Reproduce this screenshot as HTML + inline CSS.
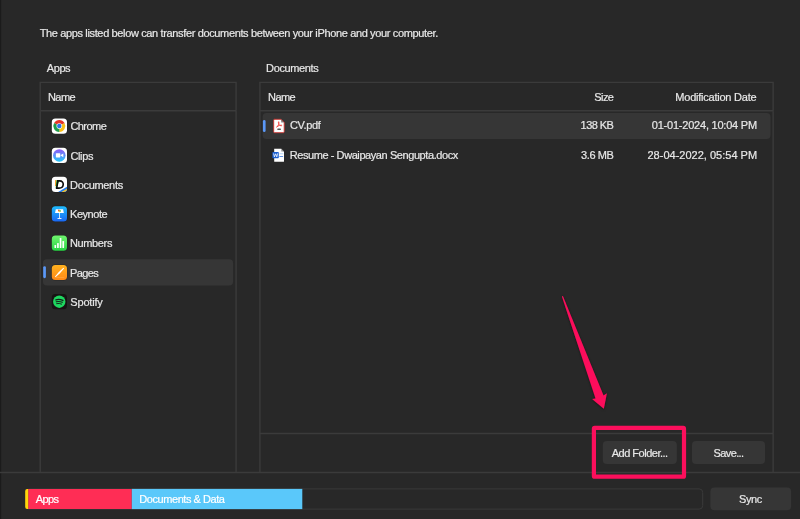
<!DOCTYPE html>
<html lang="en">
<head>
<meta charset="utf-8">
<title>File Sharing</title>
<style>
html,body{margin:0;padding:0;}
body{width:800px;height:519px;overflow:hidden;background:#282828;position:relative;
  font-family:"Liberation Sans",sans-serif;font-size:11px;color:#e6e6e6;}
.abs{position:absolute;}
.t{position:absolute;white-space:nowrap;line-height:14px;height:14px;color:#e8e8e8;font-size:11px;-webkit-text-stroke-width:0.2px;}
.r{text-align:right;}
.edge{left:0;top:0;width:2px;height:519px;background:#1f1f1f;}
.panel{border:1px solid #3b3b3b;box-sizing:border-box;}
.hline{height:1px;background:#3b3b3b;}
.sel{background:#363636;border-radius:5px;}
.ind{width:3px;border-radius:1.5px;background:#4c8ef5;}
.btn{background:#363636;border-radius:5px;text-align:center;color:#ececec;line-height:23px;height:23px;font-size:11px;}
.ico{position:absolute;width:14px;height:14px;}
</style>
</head>
<body>
<div id="root" style="position:absolute;left:0;top:0;width:800px;height:519px;will-change:transform;">
<div class="abs" style="left:0;top:0;width:1px;height:519px;background:#1b1b1b;"></div><div class="abs" style="left:1px;top:0;width:1px;height:519px;background:#252525;"></div>



<!-- panels -->
<svg class="abs" style="left:0;top:0;" width="800" height="519" viewBox="0 0 800 519">
<g stroke="#3b3b3b" stroke-width="1.4" fill="none">
<path d="M40.2 473 V82.35 H236.05 V473"/>
<path d="M40.2 110.7 H236.05"/>
<path d="M259.9 473 V82.35 H773.1 V473"/>
<path d="M259.9 110.7 H773.1"/>
<path d="M259.9 433.5 H773.1"/>
<path d="M0 472.5 H800"/>
</g>
<!-- selections -->
<rect x="42.9" y="259.2" width="190.2" height="26.2" rx="4" fill="#363636"/>
<rect x="43.2" y="266.2" width="2.7" height="12" rx="1.35" fill="#5b98f7"/>
<rect x="262.6" y="113" width="507.9" height="26.1" rx="4" fill="#363636"/>
<rect x="262.9" y="120.1" width="2.7" height="11.9" rx="1.35" fill="#5b98f7"/>
<!-- buttons -->
<rect x="602.8" y="441" width="74" height="23" rx="4" fill="#363636"/>
<rect x="692" y="441" width="73" height="23" rx="4" fill="#363636"/>
<rect x="710.4" y="487.5" width="80.7" height="22.7" rx="4" fill="#363636"/>
<!-- storage bar -->
<rect x="25.7" y="488.9" width="677" height="20.2" rx="3.5" fill="none" stroke="#3a3a3a" stroke-width="1"/>
<path d="M28.2 488.9 H131.8 V509.1 H28.2 Z" fill="#ff2d55"/>
<path d="M28.2 488.9 V509.1 H27.2 a2 2 0 0 1 -2 -2 V490.9 a2 2 0 0 1 2 -2 Z" fill="#ffd60a"/>
<rect x="131.8" y="488.9" width="170.5" height="20.2" fill="#5ac8fa"/>
</svg>

<svg class="abs" style="left:0;top:0;" width="800" height="519" viewBox="0 0 800 519">
<defs>
<linearGradient id="gcl" x1="0" y1="0" x2="0" y2="1"><stop offset="0" stop-color="#8f58f6"/><stop offset=".5" stop-color="#5d8ff9"/><stop offset="1" stop-color="#20cafc"/></linearGradient>
<linearGradient id="gkn" x1="0" y1="0" x2="0" y2="1"><stop offset="0" stop-color="#1fbcfe"/><stop offset="1" stop-color="#1a68f2"/></linearGradient>
<linearGradient id="gnm" x1="0" y1="0" x2="0" y2="1"><stop offset="0" stop-color="#70f56e"/><stop offset="1" stop-color="#27d444"/></linearGradient>
<linearGradient id="gpg" x1="0" y1="0" x2="0" y2="1"><stop offset="0" stop-color="#ffb21f"/><stop offset="1" stop-color="#ff8816"/></linearGradient>
<clipPath id="cpr"><rect width="16" height="16" rx="3.7"/></clipPath>
</defs>
<!-- Chrome -->
<g transform="translate(51.8 118.5) scale(.95)">
<rect x="-.4" y="-.4" width="16.8" height="16.8" rx="4" fill="#1a1a1a" opacity=".55"/>
<rect width="16" height="16" rx="3.7" fill="#fff"/>
<g transform="translate(7.9 7.9)">
<path d="M0 0 L-5.46 -3.15 A6.3 6.3 0 0 1 5.46 -3.15 Z" fill="#e53528"/>
<path d="M0 0 L5.46 -3.15 A6.3 6.3 0 0 1 0 6.3 Z" fill="#fbc116"/>
<path d="M0 0 L0 6.3 A6.3 6.3 0 0 1 -5.46 -3.15 Z" fill="#1e9c4c"/>
<path d="M0 -2.95 H5.6 L5.46 -3.15 L2.5 -3.3 Z" fill="#e53528"/>
<circle r="2.95" fill="#fff"/><circle r="2.35" fill="#2b74e8"/>
</g></g>
<!-- Clips -->
<g transform="translate(51.8 147.7) scale(.95)">
<rect x="-.4" y="-.4" width="16.8" height="16.8" rx="4" fill="#1a1a1a" opacity=".55"/>
<rect width="16" height="16" rx="3.7" fill="#fff"/>
<circle cx="7.9" cy="8.1" r="6.6" fill="url(#gcl)"/>
<rect x="4.3" y="5.85" width="4.6" height="4.4" rx=".6" fill="#fff"/>
<path d="M9 8.05 L12.1 6.1 V10 Z" fill="#fff"/>
</g>
<!-- Documents -->
<g transform="translate(51.8 176.8) scale(.95)">
<rect x="-.4" y="-.4" width="16.8" height="16.8" rx="4" fill="#1a1a1a" opacity=".55"/>
<rect width="16" height="16" rx="3.7" fill="#fff"/>
<g clip-path="url(#cpr)">
<path d="M6 16.4 L16.5 10.3 V17 H6 Z" fill="#1f7af0"/>
<path d="M9.4 16.4 L16.5 12.3 V14 L12.6 16.4 Z" fill="#fcc21b"/>
</g>
<path d="M3.5 3.4 L5 3.3 L4.4 9.8 L3.4 9.8 Z" fill="#ff9a1f"/>
<path d="M4.9 3.3 L8.2 3.5 L4.8 11.8 L4 11.8 Z" fill="#2fc437"/>
<path d="M6.3 4.3 H8.2 C13.6 4.3 13.2 11.9 7.6 11.9 H5.2 Z" fill="none" stroke="#0d0d0d" stroke-width="1.75" stroke-linejoin="miter"/>
</g>
<!-- Keynote -->
<g transform="translate(51.8 206.2) scale(.95)">
<rect x="-.4" y="-.4" width="16.8" height="16.8" rx="4" fill="#1a1a1a" opacity=".55"/>
<rect width="16" height="16" rx="3.7" fill="url(#gkn)"/>
<path d="M4.2 3.1 H11.9 L12.7 7.1 H3.4 Z" fill="#fff"/>
<rect x="7.65" y="7" width=".9" height="5.6" fill="#fff" opacity=".92"/>
<rect x="5.8" y="12.4" width="4.6" height="1.1" rx=".5" fill="#fff" opacity=".9"/>
<circle cx="7.4" cy="4.4" r=".9" fill="#f2542d"/><circle cx="8.7" cy="5" r=".9" fill="#5bc24a"/><circle cx="7.8" cy="5.5" r=".7" fill="#f7c52b"/>
</g>
<!-- Numbers -->
<g transform="translate(51.8 235.6) scale(.95)">
<rect x="-.4" y="-.4" width="16.8" height="16.8" rx="4" fill="#1a1a1a" opacity=".55"/>
<rect width="16" height="16" rx="3.7" fill="url(#gnm)"/>
<rect x="2.8" y="9.8" width="1.75" height="3.3" rx=".6" fill="#fff"/>
<rect x="5.55" y="7.7" width="1.8" height="5.4" rx=".6" fill="#fff"/>
<rect x="8.35" y="2.5" width="1.75" height="10.6" rx=".6" fill="#fff"/>
<rect x="11.15" y="5.7" width="1.8" height="7.4" rx=".6" fill="#fff"/>
</g>
<!-- Pages -->
<g transform="translate(51.8 264.9) scale(.95)">
<rect x="-.4" y="-.4" width="16.8" height="16.8" rx="4" fill="#1a1a1a" opacity=".55"/>
<rect width="16" height="16" rx="3.7" fill="url(#gpg)"/>
<path d="M3.3 12.6 L7.3 7.4 L12.3 3.1 L12.9 3.7 L8.6 8.7 L3.9 12.9 Z" fill="#fff"/>
<rect x="4.2" y="12.85" width="8.8" height=".5" fill="#ffd08a" opacity=".55"/>
</g>
<!-- Spotify -->
<g transform="translate(51.8 294.1) scale(.95)">
<rect width="16" height="16" rx="3.7" fill="#181314"/>
<circle cx="7.85" cy="8" r="6.5" fill="#1ed760"/>
<path d="M4.3 6 Q8 5 11.7 6.7" stroke="#142418" stroke-width="1.4" fill="none" stroke-linecap="round"/>
<path d="M4.7 8.1 Q8 7.2 11 8.7" stroke="#142418" stroke-width="1.2" fill="none" stroke-linecap="round"/>
<path d="M5.1 10 Q8 9.3 10.3 10.5" stroke="#142418" stroke-width="1" fill="none" stroke-linecap="round"/>
</g>
<!-- PDF doc -->
<g transform="translate(273.3 118.9)">
<path d="M1 .4 H7.8 L10.9 3.5 V12.9 a.9 .9 0 0 1 -.9 .9 H1.3 a.9 .9 0 0 1 -.9 -.9 V1.3 a.9 .9 0 0 1 .9 -.9 Z" fill="#fff" stroke="#c9302b" stroke-width=".9"/>
<path d="M7.8 .4 V3.5 H10.9 Z" fill="#2a2a2a" opacity=".55"/>
<path d="M3.2 8.2 C5 7.4 6 4.6 5.6 3 C5.2 2.2 4.6 3.6 5.8 5.6 C6.8 7 8.6 7.2 8.6 6.5 C8.4 5.8 5 6.6 3.2 8.2 Z" fill="none" stroke="#ee2b24" stroke-width=".75" stroke-linejoin="round"/>
<rect x="4" y="9.6" width="3.6" height="1.5" rx=".4" fill="#555"/>
</g>
<!-- Word doc -->
<g transform="translate(272.4 148.8)">
<path d="M1.8 0 H8.9 L11.6 2.7 V12.5 a.5 .5 0 0 1 -.5 .5 H2.3 a.5 .5 0 0 1 -.5 -.5 Z" fill="#fff"/>
<path d="M8.9 0 V2.7 H11.6 Z" fill="#2a2a2a" opacity=".5"/>
<rect x="7" y="4.6" width="4" height=".8" fill="#a8cdf5"/>
<rect x="7" y="7.2" width="3.7" height=".8" fill="#3a78dc"/>
<rect x="0" y="3.2" width="6.4" height="6.3" rx=".7" fill="#1b5fd0"/>
<path d="M1.2 4.6 L2 8.1 L3.2 5 L4.4 8.1 L5.2 4.6" stroke="#fff" stroke-width=".8" fill="none"/>
</g>
</svg>

<div class="t" id="intro" style="left:39.70px;top:26.16px;letter-spacing:-0.360px;">The apps listed below can transfer documents between your iPhone and your computer.</div>
<div class="t" id="lapps" style="left:46.86px;top:60.86px;letter-spacing:-0.466px;">Apps</div>
<div class="t" id="ldocs" style="left:266.11px;top:60.86px;letter-spacing:-0.371px;">Documents</div>
<div class="t" id="hname1" style="left:48.02px;top:90.16px;letter-spacing:-0.600px;">Name</div>
<div class="t" id="a1" style="left:70.40px;top:119.36px;letter-spacing:-0.552px;">Chrome</div>
<div class="t" id="a2" style="left:70.40px;top:148.66px;letter-spacing:-0.336px;">Clips</div>
<div class="t" id="a3" style="left:70.02px;top:177.96px;letter-spacing:-0.311px;">Documents</div>
<div class="t" id="a4" style="left:70.02px;top:207.16px;letter-spacing:-0.454px;">Keynote</div>
<div class="t" id="a5" style="left:70.02px;top:236.26px;letter-spacing:-0.375px;">Numbers</div>
<div class="t" id="a6" style="left:70.03px;top:265.56px;letter-spacing:-0.600px;">Pages</div>
<div class="t" id="a7" style="left:70.32px;top:294.86px;letter-spacing:-0.179px;">Spotify</div>
<div class="t" id="hname2" style="left:268.11px;top:90.16px;letter-spacing:-0.600px;">Name</div>
<div class="t" id="hsize" style="left:594.29px;top:90.16px;letter-spacing:-0.583px;">Size</div>
<div class="t" id="hdate" style="left:675.34px;top:90.16px;letter-spacing:-0.231px;">Modification Date</div>
<div class="t" id="d1n" style="left:290.07px;top:118.36px;letter-spacing:-0.382px;">CV.pdf</div>
<div class="t" id="d1s" style="left:580.62px;top:118.36px;letter-spacing:-0.550px;">138 KB</div>
<div class="t" id="d1d" style="left:651.81px;top:118.36px;letter-spacing:-0.218px;">01-01-2024, 10:04 PM</div>
<div class="t" id="d2n" style="left:289.67px;top:147.56px;letter-spacing:-0.420px;">Resume - Dwaipayan Sengupta.docx</div>
<div class="t" id="d2s" style="left:581.09px;top:147.56px;letter-spacing:-0.404px;">3.6 MB</div>
<div class="t" id="d2d" style="left:647.50px;top:147.56px;letter-spacing:0.007px;">28-04-2022, 05:54 PM</div>
<div class="t" id="badd" style="left:611.67px;top:445.66px;letter-spacing:-0.489px;">Add Folder...</div>
<div class="t" id="bsave" style="left:713.49px;top:445.66px;letter-spacing:-0.600px;">Save...</div>
<div class="t" id="bsync" style="left:738.99px;top:491.86px;letter-spacing:-0.368px;">Sync</div>
<div class="t" id="sapps" style="left:35.70px;top:491.86px;letter-spacing:-0.600px;color:#fff;">Apps</div>
<div class="t" id="sdocs" style="left:139.36px;top:491.86px;letter-spacing:-0.447px;color:#fff;">Documents &amp; Data</div>
<!-- annotation -->
<svg class="abs" style="left:0;top:0;" width="800" height="519" viewBox="0 0 800 519">
  <defs><filter id="sh" x="-20%" y="-20%" width="140%" height="140%"><feDropShadow dx="0" dy="0.6" stdDeviation="0.9" flood-color="#000" flood-opacity=".55"/></filter></defs>
  <rect x="593.9" y="427.9" width="90.1" height="48.8" rx=".8" fill="none" stroke="#fc0f5c" stroke-width="4.2" stroke-linejoin="round"/>
  <path d="M562.9 295.9 L561.9 296.4 L595.55 398.55 L592.1 399.05 L603.85 408.8 L606.9 393.2 L603.53 395.61 Z" fill="#fc0f5c" filter="url(#sh)"/>
</svg>
</div>
</body>
</html>
